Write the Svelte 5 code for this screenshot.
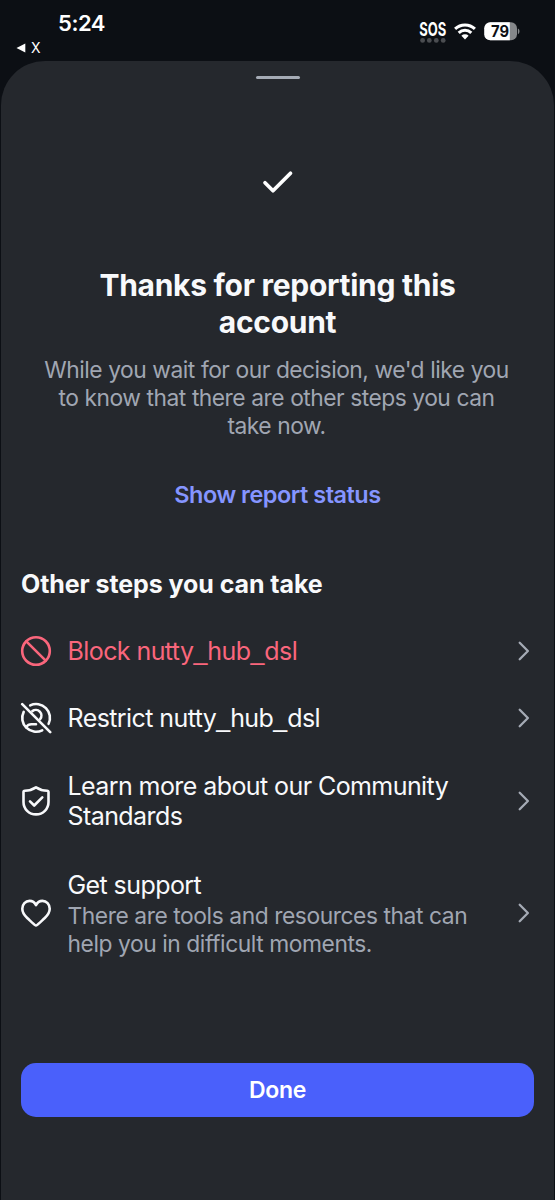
<script>
  const rows = [
    { icon: 'block', title: 'Block nutty_hub_dsl', kind: 'danger' },
    { icon: 'restrict', title: 'Restrict nutty_hub_dsl', kind: 'plain' },
    { icon: 'shield', title: 'Learn more about our Community Standards', kind: 'tall' },
    { icon: 'heart', title: 'Get support', lines: ['There are tools and resources that can', 'help you in difficult moments.'], kind: 'support' }
  ];
</script>

<div class="screen">
  <header class="status">
    <div class="left">
      <div class="time">5:24</div>
      <div class="back">
        <svg width="10" height="10" viewBox="0 0 10 10"><path d="M.5 5 9.3.6v8.8z" fill="#fff" /></svg>
        <span>X</span>
      </div>
    </div>
    <div class="right">
      <svg class="sos" width="32" height="36" viewBox="-2 -6 32 36">
        <text x="0.3" y="20" textLength="27" lengthAdjust="spacingAndGlyphs" font-size="18.8" font-weight="700" fill="#fff">SOS</text>
        <g fill="#4b4d51"><circle cx="3.6" cy="24.4" r="2.4" /><circle cx="10.3" cy="24.4" r="2.4" /><circle cx="17.3" cy="24.4" r="2.4" /><circle cx="24.2" cy="24.4" r="2.4" /></g>
      </svg>
      <svg class="wifi" width="22" height="17" viewBox="0 0 22 17">
        <g fill="none" stroke="#fff" stroke-width="3"><path d="M1.1 5.9a14.2 14.2 0 0 1 19.8 0" /><path d="M4.7 9.9a9 9 0 0 1 12.6 0" /></g>
        <path d="M7.4 12.8a5.2 5.2 0 0 1 7.2 0L11 16.5z" fill="#fff" />
      </svg>
      <svg class="battery" width="37" height="19" viewBox="0 0 37 19">
        <defs><clipPath id="cell"><rect x=".3" y=".3" width="32.7" height="18" rx="6" /></clipPath></defs>
        <g clip-path="url(#cell)"><rect width="34" height="19" fill="#85878a" /><rect width="25.8" height="19" fill="#fff" /></g>
        <path d="M33.9 6.5c2.1.7 2.1 5 0 5.7z" fill="#85878a" />
        <text x="7" y="14.9" textLength="18" lengthAdjust="spacingAndGlyphs" font-size="15.5" font-weight="700" fill="#0c0f14">79</text>
      </svg>
    </div>
  </header>

  <main class="sheet">
    <div class="grabber"></div>
    <svg class="check" width="32" height="24" viewBox="0 0 32 24"><path d="m3 12.7 8 8L28.5 3.2" fill="none" stroke="#fff" stroke-width="3.7" stroke-linecap="round" stroke-linejoin="round" /></svg>
    <h1>Thanks for reporting this<br />account</h1>
    <p class="intro">While you wait for our decision, we'd like you<br />to know that there are other steps you can<br />take now.</p>
    <button class="link">Show report status</button>
    <h2>Other steps you can take</h2>
    <div class="list">
      {#each rows as row}
        <div class="row {row.kind}">
          <svg class="icon" width="32" height="32" viewBox="0 0 32 32" fill="none" stroke="currentColor" stroke-width="2.6" stroke-linecap="round" stroke-linejoin="round">
            {#if row.icon === 'block'}
              <circle cx="16" cy="16" r="13.8" /><path d="m6.3 6.3 19.4 19.4" />
            {:else if row.icon === 'restrict'}
              <path d="m2.2 2.2 28 28" />
              <path d="M10.2 3.4A13.8 13.8 0 0 1 28.6 21.8M22.2 28.3A13.8 13.8 0 0 1 3.7 9.8" />
              <path d="M12.4 9.1A5.6 5.6 0 0 1 20.2 17" />
              <path d="M6.1 25.1Q8.1 22.3 11.4 22.3H16" />
            {:else if row.icon === 'shield'}
              <path d="M16 2.4C12.5 4.7 8.2 5.7 4.7 5.7a1.2 1.2 0 0 0-1.2 1.2V17c0 7 5.4 12.4 12.5 12.4S28.5 24 28.5 17V6.9a1.2 1.2 0 0 0-1.2-1.2C23.8 5.7 19.5 4.7 16 2.4Z" />
              <path d="m10 16.3 4.2 4.2 8.1-8.2" />
            {:else}
              <path d="M16 28.5c-1.2 0-4.8-3.8-8.8-7.5C3.8 17.8 2.3 15.2 2.3 11.8c0-4.5 3.2-7.9 7.3-7.9 3.3 0 5.3 2 6.4 4.2 1.1-2.2 3.1-4.2 6.4-4.2 4.1 0 7.3 3.4 7.3 7.9 0 3.4-1.5 6-4.9 9.2-4 3.7-7.6 7.5-8.8 7.5Z" />
            {/if}
          </svg>
          <div class="copy">
            <div class="title">{#each row.title.split('_') as part, i}{#if i}<span class="underscore">_</span>{/if}{part}{/each}</div>
            {#if row.lines}
              <div class="note">{row.lines[0]}<br />{row.lines[1]}</div>
            {/if}
          </div>
          <svg class="chevron" width="12" height="20" viewBox="0 0 12 20"><path d="m1.7 1.8 8.2 8.2-8.2 8.2" fill="none" stroke="#a5abb5" stroke-width="2.3" stroke-linecap="round" stroke-linejoin="round" /></svg>
        </div>
      {/each}
    </div>
    <button class="done">Done</button>
  </main>
</div>

<style>
  :global(body) { background: #0c0f14; }
  .screen { width: 555px; height: 1200px; display: flex; flex-direction: column; overflow: hidden; background: #0c0f14; color: #f8f9fb; font-family: Inter, "Liberation Sans", sans-serif; }
  .status { height: 61px; flex: none; display: flex; justify-content: space-between; box-sizing: border-box; padding: 0 35px 0 16px; color: #fff; }
  .time { margin: 10px 0 0 42px; font-size: 22px; font-weight: 600; line-height: 26px; letter-spacing: -.45px; }
  .back { display: flex; align-items: center; gap: 5px; height: 18px; margin-top: 3px; font-size: 14px; line-height: 18px; }
  .right { display: flex; align-items: flex-start; }
  .sos { margin-top: 10px; overflow: visible; }
  .wifi { margin: 23px 0 0 5px; }
  .battery { margin: 22px -1px 0 8px; }
  .sheet { flex: 1; display: flex; flex-direction: column; box-sizing: border-box; margin: 0 1px; padding: 0 20px; border-radius: 44px 44px 0 0; background: #25282d; }
  .grabber { flex: none; align-self: center; width: 44px; height: 3px; margin-top: 15px; border-radius: 1.5px; background: #a5abb5; }
  .check { flex: none; align-self: center; margin-top: 91px; }
  h1 { margin: 72.5px 0 0; text-align: center; font-size: 30px; line-height: 37px; font-weight: 700; letter-spacing: -.28px; }
  .intro { margin: 15.5px 2px 0 0; text-align: center; white-space: nowrap; font-size: 22.8px; line-height: 28px; letter-spacing: -.52px; word-spacing: .3px; color: #a0a6b2; }
  button { border: 0; padding: 0; font-family: inherit; }
  .link { align-self: center; margin-top: 40px; background: none; color: #8595ff; font-size: 23.5px; line-height: 30px; font-weight: 600; letter-spacing: -.5px; }
  h2 { margin: 59px 0 0; font-size: 25px; line-height: 30px; font-weight: 700; letter-spacing: -.08px; }
  .list { margin-top: 18px; }
  .row { height: 67.5px; display: flex; align-items: center; }
  .tall { height: 98px; }
  .support { height: 126px; }
  .danger { color: #fa667c; }
  .icon { flex: none; margin-left: -1px; }
  .copy { flex: 1; margin-left: 15.5px; }
  .title { font-size: 25px; line-height: 30.5px; letter-spacing: -.58px; }
  .underscore { font-family: "Liberation Sans", sans-serif; line-height: 1; letter-spacing: 0; }
  .support .copy { padding-top: 1.5px; }
  .note { margin-top: 2px; font-size: 22.8px; line-height: 28px; letter-spacing: -.43px; color: #a0a6b2; white-space: nowrap; }
  .chevron { flex: none; margin-right: 4px; }
  .done { flex: none; height: 54px; margin-top: 87px; border-radius: 15px; background: #4a60fb; color: #fff; font-size: 23px; font-weight: 600; letter-spacing: -.3px; }
</style>
